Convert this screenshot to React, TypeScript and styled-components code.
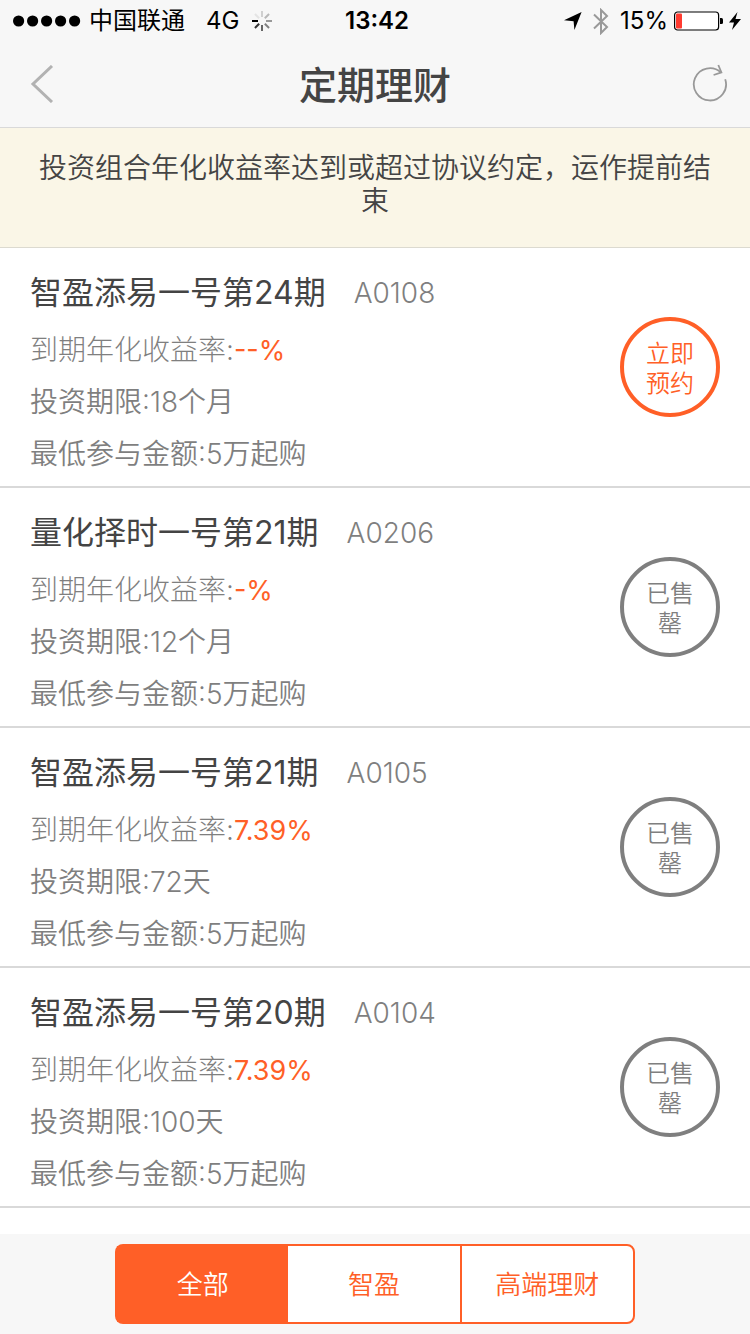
import React, { useState } from 'react';
import styled, { createGlobalStyle } from 'styled-components';

const orange = '#ff5f27';
const grey = '#7f7f7f';

const GlobalStyle = createGlobalStyle`
  *, *::before, *::after {
    box-sizing: border-box;
  }
  body {
    margin: 0;
    background: #fff;
    color: #444;
    font-family: Inter, "Noto Sans CJK SC", sans-serif;
  }
  button {
    font-family: inherit;
    cursor: pointer;
  }
`;

const Page = styled.div`
  display: flex;
  flex-direction: column;
  min-height: 100vh;
`;

const StatusBar = styled.div`
  display: grid;
  grid-template-columns: 1fr auto 1fr;
  align-items: center;
  height: 40px;
  padding: 2px 9px 0 13px;
  background: #f7f7f7;
  color: #000;
  font-size: 24px;
  line-height: 38px;
`;

const StatusGroup = styled.div<{ $end?: boolean }>`
  display: flex;
  align-items: center;
  justify-content: ${(p) => (p.$end ? 'flex-end' : 'flex-start')};
  white-space: nowrap;
`;

const Signal = styled.svg`
  margin-right: 8px;
`;

const Network = styled.span`
  margin: 0 13px 0 21px;
`;

const Clock = styled.time`
  font-weight: 600;
`;

const Bluetooth = styled.svg`
  margin: 0 11px;
`;

const Battery = styled.svg`
  margin: 0 6px;
`;

const Header = styled.header`
  display: grid;
  grid-template-columns: 80px 1fr 80px;
  align-items: center;
  height: 88px;
  background: #f7f7f7;
  border-bottom: 1px solid #d9d9d9;
`;

const Heading = styled.h1`
  margin: 0;
  padding-top: 2px;
  font-size: 38px;
  font-weight: 500;
  line-height: 56px;
  text-align: center;
`;

const IconButton = styled.button`
  display: flex;
  align-items: center;
  justify-content: center;
  height: 80px;
  padding: 0;
  border: 0;
  background: none;
`;

const Notice = styled.p`
  margin: 0;
  padding: 24px 30px 29px;
  background: #faf6e7;
  border-bottom: 1px solid #dcdad0;
  font-size: 28px;
  font-weight: 350;
  line-height: 33px;
  text-align: center;
`;

const ProductList = styled.ul`
  flex: 1;
  margin: 0;
  padding: 0;
  list-style: none;
`;

const ProductRow = styled.li`
  display: flex;
  align-items: center;
  justify-content: space-between;
  padding: 0 30px;
  border-bottom: 2px solid #d9d9d9;
`;

const ProductInfo = styled.div`
  padding: 17px 0 6px;
`;

const ProductName = styled.h2`
  display: flex;
  align-items: center;
  gap: 28px;
  margin: 0 0 3px;
  font-size: 32px;
  font-weight: 400;
  line-height: 56px;
`;

const ProductCode = styled.span`
  color: ${grey};
  font-size: 28px;
  font-weight: 300;
`;

const Detail = styled.p<{ $light?: boolean }>`
  margin: 0;
  color: ${grey};
  font-size: 28px;
  font-weight: ${(p) => (p.$light ? 300 : 350)};
  line-height: 52px;
`;

const Rate = styled.span`
  color: ${orange};
  font-size: 27px;
  font-weight: 400;
  line-height: 1;
`;

const ActionButton = styled.button`
  flex: none;
  width: 100px;
  height: 100px;
  padding: 3px 20px 0;
  border: 4px solid ${orange};
  border-radius: 50%;
  background: #fff;
  color: ${orange};
  font-size: 24px;
  font-weight: 350;
  line-height: 30px;

  &:disabled {
    border-color: ${grey};
    color: ${grey};
    cursor: default;
  }
`;

const BottomBar = styled.nav`
  position: sticky;
  bottom: 0;
  display: flex;
  justify-content: center;
  padding: 10px 30px;
  background: #f7f7f7;
`;

const Segments = styled.div`
  display: flex;
  width: 100%;
  max-width: 520px;
  height: 80px;
`;

const Segment = styled.button`
  flex: 1;
  padding: 0 0 4px;
  border: 2px solid ${orange};
  background: #fff;
  color: ${orange};
  font-size: 26px;
  font-weight: 350;

  &:not(:last-child) {
    border-right: 0;
  }
  &:first-child {
    border-radius: 8px 0 0 8px;
  }
  &:last-child {
    border-radius: 0 8px 8px 0;
  }
  &[aria-pressed='true'] {
    background: ${orange};
    color: #fff;
  }
  &[aria-pressed='true'] + & {
    border-left: 0;
  }
`;

type Product = {
  name: string;
  code: string;
  rate: string;
  term: string;
  open?: boolean;
};

const products: Product[] = [
  { name: '智盈添易一号第24期', code: 'A0108', rate: '--%', term: '18个月', open: true },
  { name: '量化择时一号第21期', code: 'A0206', rate: '-%', term: '12个月' },
  { name: '智盈添易一号第21期', code: 'A0105', rate: '7.39%', term: '72天' },
  { name: '智盈添易一号第20期', code: 'A0104', rate: '7.39%', term: '100天' },
];

const tabs = ['全部', '智盈', '高端理财'];

const spokes = ['#d0d0d0', '#b8b8b8', '#999', '#808080', '#666', '#333', '#000', '#e4e4e4'];

function Spinner() {
  return (
    <svg width="20" height="20" viewBox="0 0 20 20" strokeWidth="2">
      {spokes.map((color, i) => (
        <line key={color} x1="10" y1="0" x2="10" y2="6" stroke={color} transform={`rotate(${i * 45} 10 10)`} />
      ))}
    </svg>
  );
}

export default function App() {
  const [active, setActive] = useState(tabs[0]);

  return (
    <Page>
      <GlobalStyle />
      <StatusBar>
        <StatusGroup>
          <Signal width="68" height="12" viewBox="0 0 68 12">
            {[0, 1, 2, 3, 4].map((i) => (
              <circle key={i} cx={5.6 + i * 14} cy="6" r="5.6" />
            ))}
          </Signal>
          <span>中国联通</span>
          <Network>4G</Network>
          <Spinner />
        </StatusGroup>
        <Clock>13:42</Clock>
        <StatusGroup $end>
          <svg width="18" height="18" viewBox="0 0 18 18">
            <path d="M17.6 0L10.4 18L9.6 9.2L0 8.2Z" />
          </svg>
          <Bluetooth width="16" height="27" viewBox="0 0 16 27" fill="none" stroke="#999" strokeWidth="2">
            <path d="M1 6.5L14 19L8 25V2L14 8L1 20.5" />
          </Bluetooth>
          <span>15%</span>
          <Battery width="49" height="20" viewBox="0 0 49 20">
            <rect x="0.6" y="1" width="44" height="18" rx="3" fill="#fff" stroke="#000" strokeWidth="1.2" />
            <rect x="2" y="2.5" width="6" height="15" rx="1" fill="#ff3b30" />
            <path d="M46 7h1.5q1.5 0 1.5 1.5v3q0 1.5-1.5 1.5H46z" />
          </Battery>
          <svg width="12" height="18" viewBox="0 0 12 18">
            <path d="M8.5 0L0 10.5H5L3 18L12 7H6.5Z" />
          </svg>
        </StatusGroup>
      </StatusBar>

      <Header>
        <IconButton type="button" aria-label="返回">
          <svg width="28" height="38" viewBox="-4 0 28 38" fill="none" stroke="#b2b2b2" strokeWidth="3">
            <path d="M22 1L3 19L22 37" />
          </svg>
        </IconButton>
        <Heading>定期理财</Heading>
        <IconButton type="button" aria-label="刷新">
          <svg width="36" height="40" viewBox="0 0 36 40" fill="none" stroke="#999" strokeWidth="1.8">
            <path d="M33.2 15.3A16.1 16.1 0 1 1 28.9 8.6" />
            <path d="M26.3 1L29.4 8.4L21.6 11" />
          </svg>
        </IconButton>
      </Header>

      <Notice>投资组合年化收益率达到或超过协议约定，运作提前结束</Notice>

      <ProductList>
        {products.map((p) => (
          <ProductRow key={p.code}>
            <ProductInfo>
              <ProductName>
                {p.name}
                <ProductCode>{p.code}</ProductCode>
              </ProductName>
              <Detail $light>
                到期年化收益率:<Rate>{p.rate}</Rate>
              </Detail>
              <Detail>投资期限:{p.term}</Detail>
              <Detail>最低参与金额:5万起购</Detail>
            </ProductInfo>
            <ActionButton type="button" disabled={!p.open}>
              {p.open ? '立即预约' : '已售罄'}
            </ActionButton>
          </ProductRow>
        ))}
      </ProductList>

      <BottomBar>
        <Segments>
          {tabs.map((tab) => (
            <Segment
              key={tab}
              type="button"
              aria-pressed={tab === active}
              onClick={() => setActive(tab)}
            >
              {tab}
            </Segment>
          ))}
        </Segments>
      </BottomBar>
    </Page>
  );
}
